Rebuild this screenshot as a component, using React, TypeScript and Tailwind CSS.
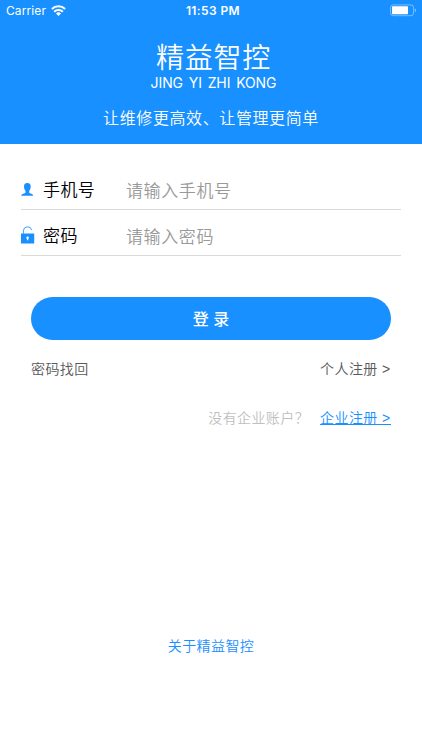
import type { ReactNode } from 'react';

function WifiIcon() {
  return (
    <svg className="-mt-0.5" width="15" height="11" viewBox="0 0 15 11" fill="none" stroke="#fff" strokeWidth="2.1">
      <path d="M0.9 4a9.4 9.4 0 0 1 13.2 0" />
      <path d="M3.2 6.7a6.1 6.1 0 0 1 8.6 0" />
      <path d="M7.5 11 5 8.5a3.5 3.5 0 0 1 5 0z" fill="#fff" stroke="none" />
    </svg>
  );
}

function BatteryIcon() {
  return (
    <svg className="-mt-px" width="28" height="13" viewBox="0 0 28 13">
      <rect x="1.5" y="0.9" width="23" height="10.8" rx="2.6" fill="none" stroke="#fff" strokeOpacity="0.4" />
      <rect x="3" y="2.3" width="16" height="8" rx="0.8" fill="#fff" />
      <path d="M25.8 4.3c1.6.6 1.6 3.4 0 4z" fill="#fff" fillOpacity="0.5" />
    </svg>
  );
}

function UserIcon() {
  return (
    <svg className="-mt-[3px]" width="13" height="13" viewBox="0 0 13 13" fill="#1890ff">
      <path d="M6.3 0C8.8 0 9.8 1.5 9.7 3.8C9.6 5.6 9 7 8.2 7.9V9.8C8.6 10.7 12 10.6 12.3 12.8H0.2C0.5 10.6 4.1 10.7 4.5 9.8V7.9C3.7 7 3.1 5.6 3 3.8C2.9 1.5 3.9 0 6.3 0Z" />
    </svg>
  );
}

function LockIcon() {
  return (
    <svg className="-mt-1" width="14" height="18" viewBox="0 0 14 18">
      <path d="M2.4 7.8V4.9A4.2 4.2 0 0 1 10.7 4.1" fill="none" stroke="#1890ff" strokeOpacity="0.85" strokeWidth="1" />
      <rect x="0" y="7.5" width="13.2" height="10" rx="0.3" fill="#1890ff" />
      <path d="M6.6 10.6a1.2 1.2 0 0 1 .6 2.3v1.4H6v-1.4a1.2 1.2 0 0 1 .6-2.3z" fill="#fff" />
    </svg>
  );
}

function Field({ icon, label, hint }: { icon: ReactNode; label: string; hint: string }) {
  return (
    <label className="mx-[21px] flex h-[46px] items-center border-b border-[#d9d9d9] pt-2">
      <span className="flex w-[22px] shrink-0 items-center">{icon}</span>
      <span className="w-[83px] shrink-0 pb-px text-[17px] leading-6 tracking-[0.4px] text-black">{label}</span>
      <input
        placeholder={hint}
        className="min-w-0 flex-1 bg-transparent pt-px text-[17px] leading-6 tracking-[0.6px] outline-none placeholder:text-[#999]"
      />
    </label>
  );
}

function Chevron() {
  return <span className="font-['Liberation_Sans',sans-serif] tracking-[0.8px]">&gt;</span>;
}

export default function App() {
  return (
    <main className="flex h-[750px] w-[422px] flex-col bg-white font-['Inter','Noto_Sans_CJK_SC',sans-serif] font-[350]">
      <header className="flex h-36 flex-col items-center bg-[#1890ff] text-white">
        <div className="grid h-[22px] w-full grid-cols-3 items-center pr-[5px] pl-[6px]">
          <div className="flex items-center gap-[5px] text-[12px] leading-5 font-normal tracking-[0.1px]">
            <span>Carrier</span>
            <WifiIcon />
          </div>
          <div className="pl-[3px] text-center text-[12px] leading-5 font-semibold tracking-[0.4px]">11:53 PM</div>
          <div className="flex justify-end"><BatteryIcon /></div>
        </div>
        <h1 className="mt-4 pl-[5px] text-[28px] leading-10 tracking-[0.8px]">精益智控</h1>
        <p className="-mt-1 pl-[5px] text-[14px] leading-[18px] font-normal tracking-[-0.1px] [word-spacing:2px]">JING YI ZHI KONG</p>
        <p className="mt-[14px] text-[16px] leading-6 tracking-[0.6px]">让维修更高效、让管理更简单</p>
      </header>

      <section className="mt-5">
        <Field icon={<UserIcon />} label="手机号" hint="请输入手机号" />
        <Field icon={<LockIcon />} label="密码" hint="请输入密码" />
      </section>

      <button className="mx-[31px] mt-[40.5px] h-[43px] rounded-full bg-[#1890ff] pt-px text-[16px] leading-6 font-medium text-white">
        登 录
      </button>

      <nav className="mx-[31px] mt-[19.5px] flex h-5 justify-between text-[14px] leading-5 tracking-[0.4px] text-[#595959]">
        <a>密码找回</a>
        <a>个人注册 <Chevron /></a>
      </nav>
      <div className="mx-[31px] mt-[29px] flex h-5 justify-end gap-[11px] text-[14px] leading-5 tracking-[0.4px]">
        <span className="text-[#bfbfbf]">没有企业账户？</span>
        <a className="text-[#1890ff] underline">企业注册 <Chevron /></a>
      </div>

      <footer className="mt-auto mb-[94px] text-center text-[14px] leading-5 tracking-[0.4px] text-[#1890ff]">
        关于精益智控
      </footer>
    </main>
  );
}
